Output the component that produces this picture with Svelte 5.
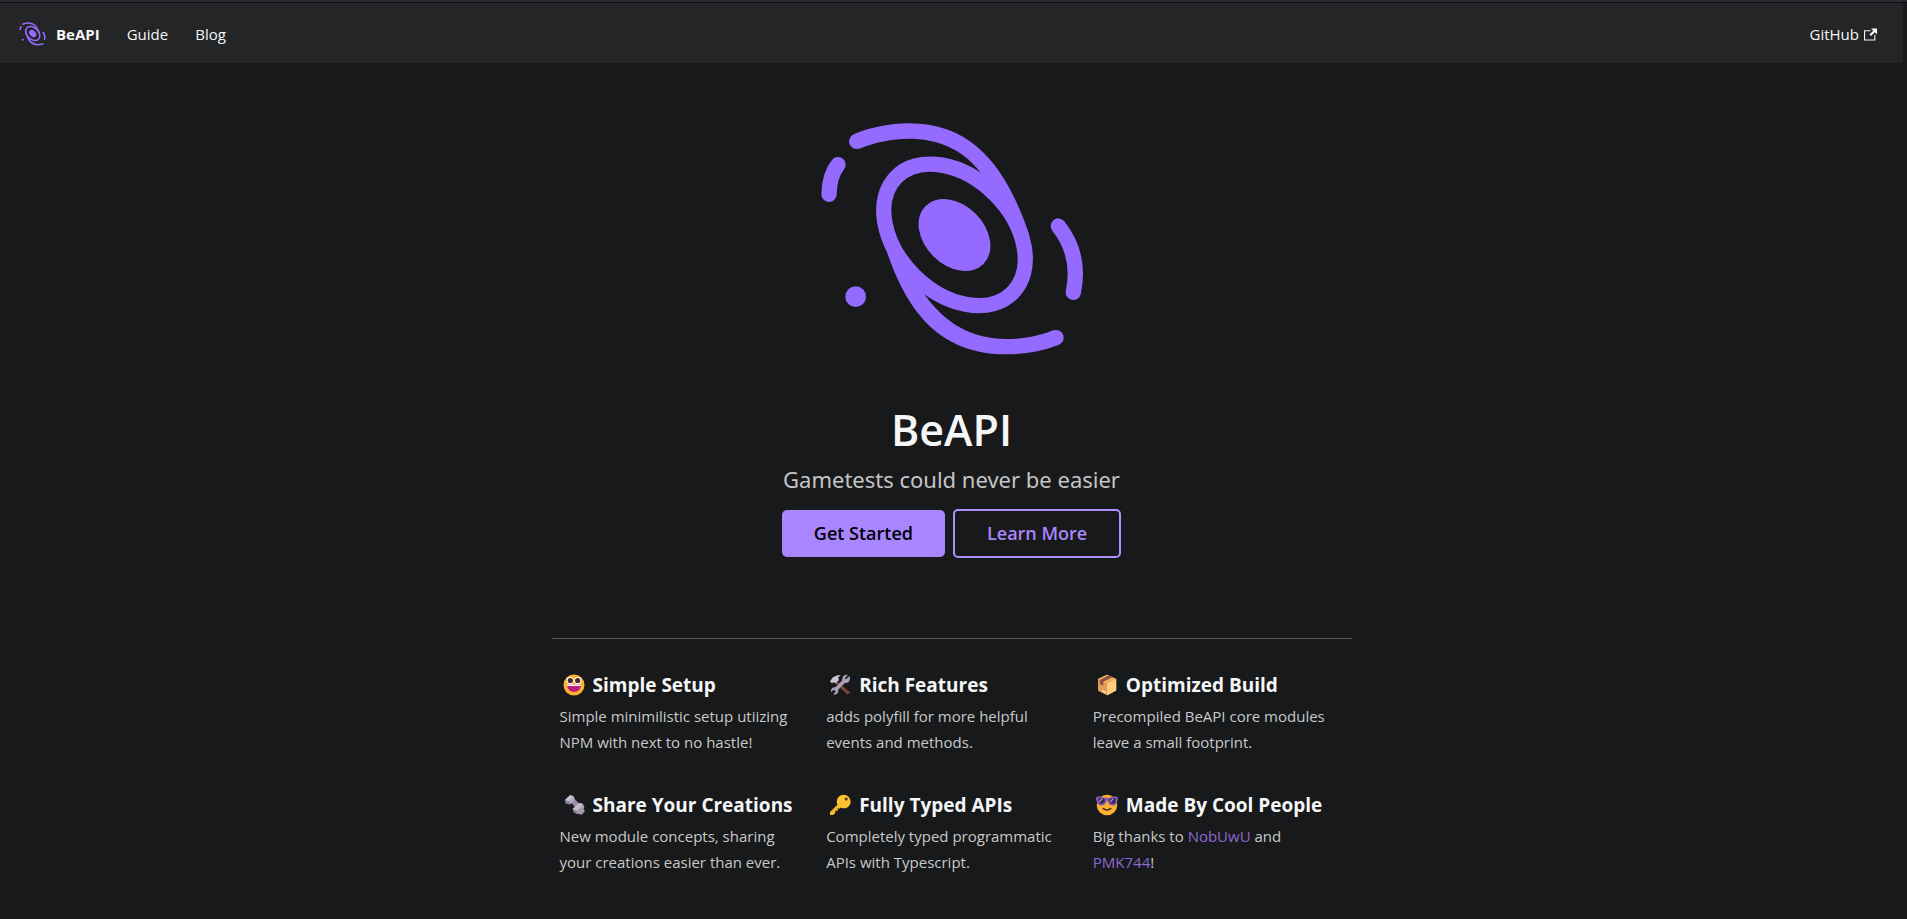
<script>
  const features = [
    { icon: 'smile', title: 'Simple Setup', text: 'Simple minimilistic setup utiizing NPM with next to no hastle!' },
    { icon: 'tools', title: 'Rich Features', text: 'adds polyfill for more helpful events and methods.' },
    { icon: 'box', title: 'Optimized Build', text: 'Precompiled BeAPI core modules leave a small footprint.' },
    { icon: 'bolt', title: 'Share Your Creations', text: 'New module concepts, sharing your creations easier than ever.' },
    { icon: 'key', title: 'Fully Typed APIs', text: 'Completely typed programmatic APIs with Typescript.' },
    { icon: 'cool', title: 'Made By Cool People', text: '' }
  ];
</script>

{#snippet galaxy(cls)}
  <svg class={cls} viewBox="-9 0 870 780" aria-hidden="true">
    <g fill="none" stroke="#956aff" stroke-width="46" stroke-linecap="round">
      <ellipse cx="433.5" cy="374.5" rx="246" ry="172" transform="rotate(45 433.5 374.5)" />
      <path d="M57 253C58 215 66 185 84 164" />
      <path d="M745 348C790 405 805 475 790 547" />
    </g>
    <g fill="#956aff">
      <path d="M131 73C180 52 240 40 297 40C480 40 575 160 640 325C646 342 651 355 657 375L630 375L595 300L530 215L510 185C455 115 380 86 297 86C245 86 195 97 148 116Z" />
      <path d="M747 704C695 724 640 733 590 733C400 733 295 620 229 420C223 405 217 390 212 375L235 374L272 449L337 534L345 555C405 640 485 687 590 687C640 687 690 677 731 660Z" />
      <circle cx="140" cy="94" r="23" />
      <circle cx="738" cy="683" r="23" />
      <ellipse cx="433.5" cy="375" rx="123" ry="90" transform="rotate(45 433.5 375)" />
      <circle cx="137" cy="560" r="31" />
    </g>
  </svg>
{/snippet}

{#snippet emoji(name)}
  <svg class="emoji" viewBox="0 0 22 22" aria-hidden="true">
    {#if name === 'smile'}
      <circle cx="11" cy="11" r="10.5" fill="#ffb02e" />
      <circle cx="7.2" cy="6.4" r="3.5" fill="#fff" />
      <circle cx="14.8" cy="6.4" r="3.5" fill="#fff" />
      <circle cx="7.3" cy="6.5" r="2.6" fill="#402a32" />
      <circle cx="14.7" cy="6.5" r="2.6" fill="#402a32" />
      <path d="M4 10.6H18C18 15.2 15 18 11 18S4 15.2 4 10.6Z" fill="#bb1d80" />
      <path d="M4 10.5H18L17.8 12H4.2Z" fill="#fff" />
    {:else if name === 'tools'}
      <path d="M8.3 7.4L21.2 18.4L18.5 20.6L6.4 9.5Z" fill="#7d4533" />
      <path d="M1 7.2L4 3.2L8.4 1.2L12 1.3L9 3.5L10.1 6L6.4 9.4L4.6 8L3 9.5Z" fill="#cdc4d6" />
      <path d="M20.4 2L17 5.2L15.8 4.2L18.8.9C15.4.1 12.4 3 13.3 6.4L6.3 13.3C3.6 12.6 1.2 15.3 2.2 18L4.8 15.8L6.8 17.4L4.1 20.3C7.3 21.6 10 18.8 9.2 15.7L15.8 9C19.3 9.8 22.3 6.1 20.4 2Z" fill="#aaa0b9" />
    {:else if name === 'box'}
      <path d="M11 .8L20.2 5V16.6L11.4 21.2L2 16.6V5Z" fill="#f3ad61" />
      <path d="M2 5L11.2 9.6V21.2L2 16.6Z" fill="#e39d58" />
      <path d="M11.2 9.6L20.2 5V16.6L11.2 21.2Z" fill="#ffce7c" />
      <path d="M11 .8L20.2 5L11.2 9.6L2 5Z" fill="#f3ad61" />
      <path d="M12.4 1.5L3.8 6V10L7.3 11.7V7.7L16.5 3.3Z" fill="#8c5543" />
      <path d="M6.4 15.8L9.7 17.5V19.5L6.4 17.8Z" fill="#f4e5ce" />
    {:else if name === 'bolt'}
      <path d="M7 7L11 4.5L18 11.2L13.5 15.2Z" fill="#998ea4" />
      <path d="M2 6L7 1.2L10.7 2.2L12 5.6L7.2 10.5L2.8 9.5Z" fill="#b5aabd" />
      <path d="M2 6L6 7L7.2 10.5L2.8 9.5Z" fill="#86798f" />
      <path d="M7 1.2L10.7 2.2L6 7L2 6Z" fill="#ccc1d1" />
      <path d="M9.7 15.1L16.1 9L20 10L21.4 13.8L14.6 20L11 18.6Z" fill="#b5aabd" />
      <path d="M9.7 15.1L13.4 16.4L14.6 20L11 18.6Z" fill="#86798f" />
      <path d="M16.1 9L20 10L13.4 16.4L9.7 15.1Z" fill="#c5bac9" />
      <path d="M15 16L19 13L22 17L18.8 20.8L15.2 19.8Z" fill="#a397ad" />
    {:else if name === 'key'}
      <path d="M14.7.8C10.8.8 7.5 4 7.8 8.2C8 9.2 8.1 10 8.4 10.7L1 18.1V21H4L6.3 19V16.7H8.7V14.5H10.8L11.8 13.5C16 16 21.6 12.8 21.6 7.7C21.6 3.8 18.5.8 14.7.8Z" fill="#fcc22e" />
      <path d="M1.2 18.7L9.2 11L10 11.8L2 20Z" fill="#e8ac28" />
      <circle cx="17.2" cy="4.9" r="1.5" fill="#443433" />
    {:else}
      <circle cx="11" cy="11" r="10.3" fill="#ffb02e" />
      <path d="M0 3.2L2.8 2.2L9.7 3.7H12.3L19.2 2.2L22 3.2V5.2L20.7 9.5C19.5 12 13.7 12.5 12.4 9.3L11 6.3L9.6 9.3C8.3 12.5 2.5 12 1.3 9.5L0 5.2Z" fill="#8658af" />
      <path d="M2 4.6C5 3.7 7.7 4.4 9.1 5.7C8.4 9.2 6.3 10.8 3.2 9.2Z" fill="#352b4d" />
      <path d="M20 4.6C17 3.7 14.3 4.4 12.9 5.7C13.6 9.2 15.7 10.8 18.8 9.2Z" fill="#352b4d" />
      <path d="M3.2 8.2L6.2 4.6M14.2 8.2L17.2 4.6" stroke="#bb8fe8" stroke-width="1.3" />
      <path d="M7 14.4Q11 17.5 15 14.4" fill="none" stroke="#402a32" stroke-width="1.4" stroke-linecap="round" />
    {/if}
  </svg>
{/snippet}

<div class="edge"></div>
<div class="page">
  <header>
    <nav aria-label="Main">
      <a class="brand" href="#home">{@render galaxy('mark')}<b>BeAPI</b></a>
      <a href="#guide">Guide</a>
      <a href="#blog">Blog</a>
      <a class="github" href="#github">
        GitHub
        <svg viewBox="0 0 24 24" aria-hidden="true"><path fill="currentColor" d="M21 13v10h-21v-19h12v2h-10v15h17v-8h2zm3-12h-10.988l4.035 4-6.977 7.07 2.828 2.828 6.977-7.07 4.125 4.172v-11z" /></svg>
      </a>
    </nav>
  </header>

  <main>
    <section class="hero">
      {@render galaxy('logo')}
      <h1>BeAPI</h1>
      <p>Gametests could never be easier</p>
      <div class="actions">
        <a class="btn solid" href="#start">Get Started</a>
        <a class="btn outline" href="#learn">Learn More</a>
      </div>
    </section>

    <section class="features">
      {#each features as f}
        <article>
          <h2>{@render emoji(f.icon)}{f.title}</h2>
          {#if f.text}
            <p>{f.text}</p>
          {:else}
            <p>Big thanks to <a href="#nobuwu">NobUwU</a> and <a href="#pmk744">PMK744</a>!</p>
          {/if}
        </article>
      {/each}
    </section>
  </main>
</div>

<style>
  :global(body) {
    background: #18191a;
    font-family: "Open Sans", "Noto Sans", sans-serif;
    font-size: 15px;
    color: #f5f6f7;
  }
  .edge {
    height: 2px;
    background: #2b2a33;
    border-bottom: 1px solid #0c0c0d;
  }
  .page {
    margin-right: 4px;
  }
  header {
    background: #242526;
  }
  nav {
    display: flex;
    align-items: center;
    gap: 27px;
    min-height: 58px;
    padding: 2px 26px 0 18px;
  }
  nav a {
    color: inherit;
    text-decoration: none;
  }
  .brand {
    display: flex;
    align-items: center;
    gap: 9px;
  }
  .mark {
    width: 29px;
    height: 26px;
  }
  .github {
    display: flex;
    align-items: center;
    gap: 5px;
    margin-left: auto;
  }
  .github svg {
    width: 13px;
    height: 13px;
  }
  main {
    width: 800px;
    max-width: 100%;
    margin: 0 auto;
  }
  .hero {
    display: flex;
    flex-direction: column;
    align-items: center;
    padding: 47px 0 80px;
    border-bottom: 1px solid #5a5b5c;
  }
  .logo {
    width: 290px;
    height: 260px;
  }
  h1 {
    margin: 30px 0 0;
    font-size: 43px;
    font-weight: 600;
    line-height: 60px;
  }
  .hero p {
    margin: 3px 0 14px;
    font-family: "Noto Sans", "Open Sans", sans-serif;
    font-size: 22px;
    line-height: 32px;
    color: #c4c5c6;
  }
  .actions {
    display: flex;
    align-items: center;
    gap: 8px;
  }
  .btn {
    padding: 0 32px;
    border-radius: 5px;
    font-size: 18px;
    font-weight: 600;
    line-height: 47px;
    text-decoration: none;
  }
  .solid {
    background: #a985ff;
    color: #000;
  }
  .outline {
    border: 2px solid #b08fff;
    line-height: 45px;
    color: #a985ff;
  }
  .features {
    display: grid;
    grid-template-columns: repeat(3, 1fr);
    row-gap: 36px;
    padding: 32px 0;
  }
  article {
    padding: 0 8px;
  }
  h2 {
    display: flex;
    align-items: center;
    gap: 8px;
    margin: 0 0 4px;
    padding-left: 3px;
    font-size: 19px;
    font-weight: 700;
    line-height: 28px;
    white-space: nowrap;
  }
  .emoji {
    width: 22px;
    height: 22px;
  }
  article p {
    margin: 0;
    line-height: 26px;
    color: #c8c9ca;
  }
  article a {
    color: #8c68d2;
    text-decoration: none;
  }
</style>
